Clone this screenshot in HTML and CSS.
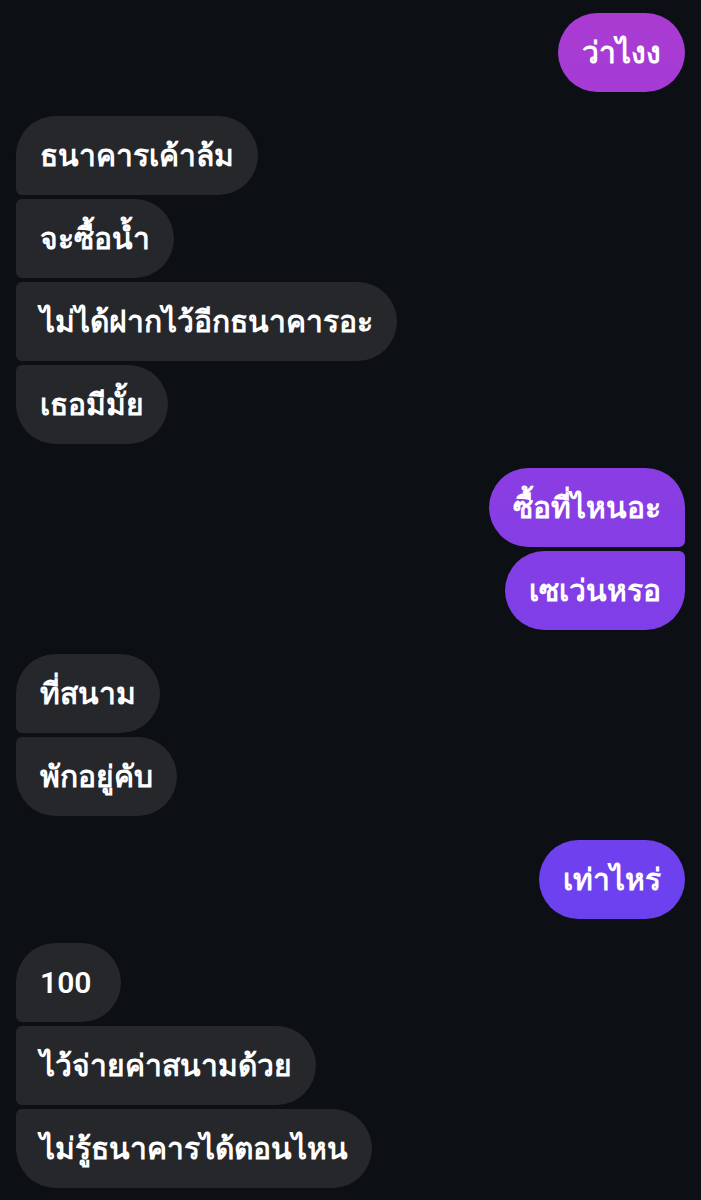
FILE: index.html
```html
<!DOCTYPE html>
<html lang="th">
<head>
  <meta charset="UTF-8" />
  <meta name="viewport" content="width=device-width, initial-scale=1.0">
  <title>แชท</title>
  <link rel="stylesheet" href="styles.css">
</head>
<body>

  <div class="chat">
    <div class="group me">
      <div class="msg">ว่าไงง</div>
    </div>

    <div class="group them">
      <div class="msg">ธนาคารเค้าล้ม</div>
      <div class="msg">จะซื้อน้ำ</div>
      <div class="msg">ไม่ได้ฝากไว้อีกธนาคารอะ</div>
      <div class="msg">เธอมีมั้ย</div>
    </div>

    <div class="group me">
      <div class="msg">ซื้อที่ไหนอะ</div>
      <div class="msg">เซเว่นหรอ</div>
    </div>

    <div class="group them">
      <div class="msg">ที่สนาม</div>
      <div class="msg">พักอยู่คับ</div>
    </div>

    <div class="group me">
      <div class="msg">เท่าไหร่</div>
    </div>

    <div class="group them">
      <div class="msg">100</div>
      <div class="msg">ไว้จ่ายค่าสนามด้วย</div>
      <div class="msg">ไม่รู้ธนาคารได้ตอนไหน</div>
    </div>
  </div>

</body>
</html>
```

FILE: styles.css
```css
* {
  margin: 0;
  padding: 0;
  box-sizing: border-box;
}

body {
  background: #0c0f14;
  font-family: Roboto, sans-serif;
  color: #fff;
  height: 1200px;
  overflow: hidden;
}

.chat {
  display: flex;
  flex-direction: column;
  gap: 24px;
  padding: 13px 16px;
}

.group {
  display: flex;
  flex-direction: column;
  gap: 4px;
}

.group.them {
  align-items: flex-start;
}

.group.me {
  align-items: flex-end;
}

.msg {
  height: 79px;
  min-width: 105px;
  display: flex;
  align-items: center;
  padding: 0 24px;
  font-size: 30px;
  font-weight: 600;
  border-radius: 40px;
  white-space: nowrap;
}

.them .msg {
  background: #25272b;
}

/* gradient follows the screen, like the messenger app */
.me .msg {
  background: linear-gradient(to bottom, #ab3bd1 0px, #8a3de3 480px, #6c41ef 900px, #5d43f2 1200px);
  background-attachment: fixed;
}

/* grouped corners */
.them .msg:not(:last-child) {
  border-bottom-left-radius: 6px;
}
.them .msg:not(:first-child) {
  border-top-left-radius: 6px;
}
.me .msg:not(:last-child) {
  border-bottom-right-radius: 6px;
}
.me .msg:not(:first-child) {
  border-top-right-radius: 6px;
}
```
